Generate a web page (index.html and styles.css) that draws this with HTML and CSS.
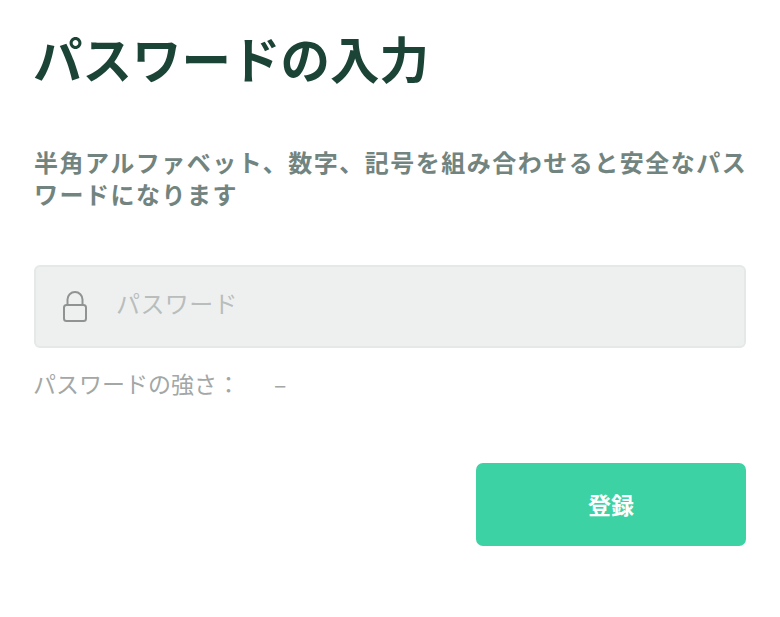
FILE: index.html
```html
<!DOCTYPE html>
<html lang="ja">
<head>
<meta charset="utf-8">
<title>パスワードの入力</title>
<link rel="stylesheet" href="styles.css">
</head>
<body>
<main class="page">
  <h1 class="title">パスワードの入力</h1>
  <p class="lead">半角アルファベット、数字、記号を組み合わせると安全なパスワードになります</p>
  <div class="field">
    <svg class="lock" width="24" height="31" viewBox="0 0 24 31" fill="none" stroke="#8f9492" stroke-width="2">
      <rect x="1" y="14" width="22" height="16" rx="2.5"/>
      <path d="M4.5 14V8.5a7.5 7.5 0 0 1 15 0V14"/>
    </svg>
    <span class="placeholder">パスワード</span>
  </div>
  <div class="strength"><span>パスワードの強さ：</span><span class="strength-value">–</span></div>
  <div class="actions"><button class="submit" type="button">登録</button></div>
</main>
</body>
</html>
```
FILE: styles.css
```css
* { box-sizing: border-box; }
html, body { margin: 0; height: 100%; background: #fff; }
body { font-family: "Noto Sans CJK JP", "Noto Sans", sans-serif; overflow: hidden; }
.page { padding: 23px 34px 0 33px; }
.title { margin: 0; font-size: 49.5px; line-height: 70px; font-weight: 700; color: #1c4436; letter-spacing: 0; }
.lead { margin: 53px -4px 0 1px; font-size: 24px; line-height: 32px; font-weight: 700; color: #728480; letter-spacing: 1.5px; }
.field { margin: 55px 0 0 1px; height: 83px; display: flex; align-items: center; gap: 29px; padding-left: 27px; background: #eef0f0; border: 2px solid #e5e8e8; border-radius: 6px; }
.lock { flex: none; }
.placeholder { padding-bottom: 8px; font-size: 24px; color: #b9bdbc; letter-spacing: 0.4px; }
.strength { margin-top: 18px; display: flex; font-size: 23px; line-height: 34px; color: #a3a7a6; }
.strength-value { margin-left: 34px; }
.actions { margin-top: 63px; display: flex; justify-content: flex-end; }
.submit { width: 270px; height: 83px; padding: 0 0 2px; border: 0; border-radius: 7px; background: #3dd2a3; color: #fff; font: 700 23px "Noto Sans CJK JP", sans-serif; }
```
